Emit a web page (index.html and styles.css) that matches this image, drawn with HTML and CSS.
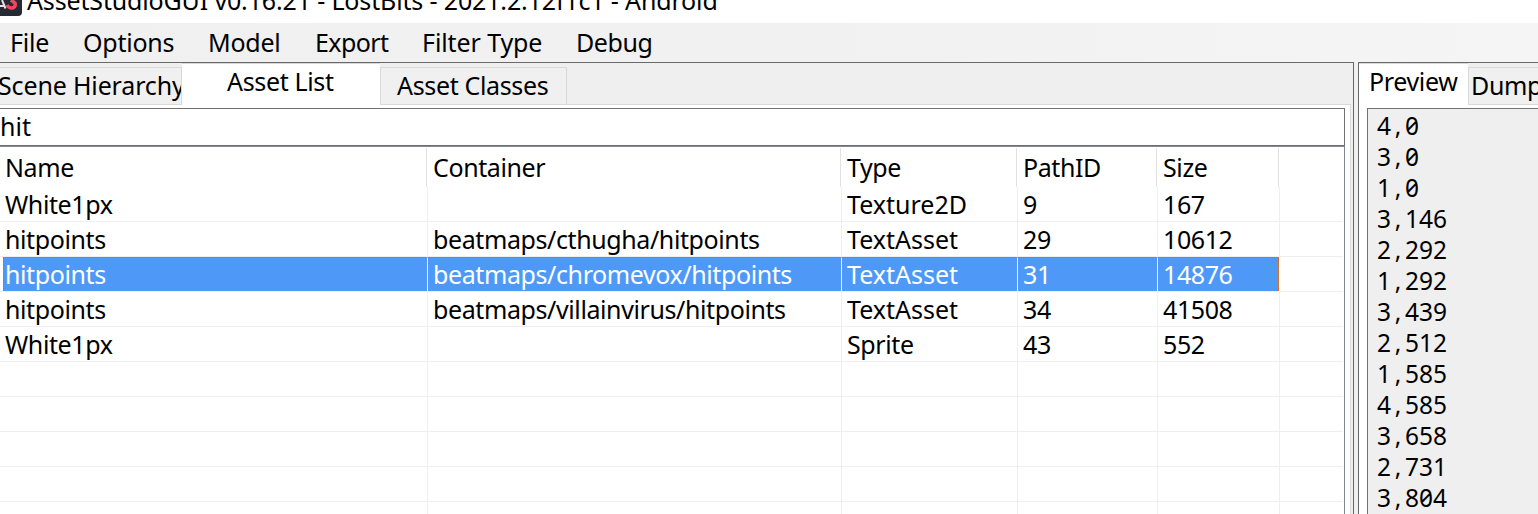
FILE: index.html
```
<!DOCTYPE html>
<html lang="en">
<head>
<meta charset="utf-8">
<title>AssetStudioGUI</title>
<link rel="stylesheet" href="styles.css">
</head>
<body>
<div class="window">
  <header class="titlebar">
    <svg class="logo" width="22" height="16" viewBox="0 0 22 16">
      <path d="M0 0H22V12Q22 16 18 16H0Z" fill="#262a35"/>
      <path d="M0 6H4M2 0L5.500 8.500" fill="none" stroke="#eadfe6" stroke-width="2"/>
      <path d="M7 5Q9 8.500 12.500 8Q16 7 15 3L11 0" fill="none" stroke="#f4455f" stroke-width="3.500"/>
    </svg>
    <span class="caption">AssetStudioGUI v0.16.21 - LostBits - 2021.2.12f1c1 - Android</span>
  </header>
  <nav class="menu">
    <span class="item file">File</span><span class="item options">Options</span><span class="item model">Model</span><span class="item export">Export</span><span class="item filter">Filter Type</span><span class="item debug">Debug</span>
  </nav>
  <main class="split">
    <section class="assets">
      <div class="tabs">
        <div class="tab scene"><span>Scene Hierarchy</span></div>
        <div class="tab list active"><span>Asset List</span></div>
        <div class="tab classes"><span>Asset Classes</span></div>
      </div>
      <div class="page">
        <div class="search"><span>hit</span></div>
        <div class="listview">
          <div class="row head"><div>Name</div><div>Container</div><div>Type</div><div>PathID</div><div>Size</div></div>
          <div class="row"><div>White1px</div><div></div><div class="wide">Texture2D</div><div>9</div><div>167</div></div>
          <div class="row"><div>hitpoints</div><div>beatmaps/cthugha/hitpoints</div><div class="wide">TextAsset</div><div>29</div><div>10612</div></div>
          <div class="row selected"><div>hitpoints</div><div>beatmaps/chromevox/hitpoints</div><div class="wide">TextAsset</div><div>31</div><div>14876</div></div>
          <div class="row"><div>hitpoints</div><div>beatmaps/villainvirus/hitpoints</div><div class="wide">TextAsset</div><div>34</div><div>41508</div></div>
          <div class="row"><div>White1px</div><div></div><div>Sprite</div><div>43</div><div>552</div></div>
          <div class="row"><div></div><div></div><div></div><div></div><div></div></div>
          <div class="row"><div></div><div></div><div></div><div></div><div></div></div>
          <div class="row"><div></div><div></div><div></div><div></div><div></div></div>
          <div class="row"><div></div><div></div><div></div><div></div><div></div></div>
          <div class="row"><div></div><div></div><div></div><div></div><div></div></div>
        </div>
      </div>
    </section>
    <section class="viewer">
      <div class="tabs">
        <div class="tab preview active"><span>Preview</span></div>
        <div class="tab dump"><span>Dump</span></div>
      </div>
      <div class="page">
        <div class="text">
          <p>4<i>,</i>0</p><p>3<i>,</i>0</p><p>1<i>,</i>0</p><p>3<i>,</i>146</p><p>2<i>,</i>292</p><p>1<i>,</i>292</p><p>3<i>,</i>439</p><p>2<i>,</i>512</p><p>1<i>,</i>585</p><p>4<i>,</i>585</p><p>3<i>,</i>658</p><p>2<i>,</i>731</p><p>3<i>,</i>804</p>
        </div>
      </div>
    </section>
  </main>
</div>
</body>
</html>
```
FILE: styles.css
```
* { box-sizing: border-box; }
body { margin: 0; overflow: hidden; background: #fff; color: #000; font-family: "Noto Sans", "Open Sans", sans-serif; font-size: 25px; white-space: nowrap; }
.window { width: 1538px; height: 514px; overflow: hidden; display: flex; flex-direction: column; }
.titlebar { height: 23px; flex: none; display: flex; align-items: flex-start; overflow: hidden; background: #fff; }
.logo { display: block; flex: none; }
.caption { margin-left: 5px; line-height: 1px; letter-spacing: -0.150px; }
.menu { height: 39px; flex: none; display: flex; line-height: 39px; padding-left: 10px; background: linear-gradient(90deg, #f0f0f0, #f1f1f1 50%, #f5f5f5); }
.item { flex: none; letter-spacing: -0.250px; }
.file { width: 73px; }
.options { width: 125px; }
.model { width: 107px; }
.export { width: 107px; letter-spacing: -0.600px; }
.filter { width: 154px; letter-spacing: -0.100px; }
.debug { letter-spacing: -0.400px; }
.split { flex: 1; min-height: 0; display: grid; grid-template-columns: 1354px 180px; column-gap: 4px; background: #f0f0f0; }
.assets, .viewer { border-top: 1px solid #696969; display: flex; flex-direction: column; min-width: 0; min-height: 0; overflow: hidden; background: #efefef; }
.assets { border-right: 1px solid #696969; padding-right: 2px; }
.viewer { border-left: 1px solid #696969; }
.tabs { height: 42px; flex: none; display: flex; align-items: flex-end; }
.tab { height: 38px; flex: none; overflow: hidden; line-height: 34px; border: 1px solid #d9d9d9; border-left: 0; background: #f0f0f0; letter-spacing: -0.350px; }
.tab.active { height: 42px; line-height: 35px; background: #fff; border-bottom: 0; border-right: 0; }
.scene { width: 182px; }
.scene span { margin-left: -2px; letter-spacing: -0.150px; }
.list { width: 198px; padding-left: 45px; }
.classes { width: 187px; padding-left: 16px; border-left: 1px solid #d9d9d9; }
.page { flex: 1; min-height: 0; background: #fff; padding-top: 3px; }
.assets .page { border-top: 1px solid #d9d9d9; border-right: 1px solid #d9d9d9; padding-right: 5px; margin-top: -1px; }
.tabs { position: relative; }
.search { height: 38px; line-height: 35px; border: 1px solid #707375; border-left: 0; }
.listview { height: 368px; border-top: 1px solid #828790; border-right: 1px solid #828790; overflow: hidden; padding-right: 1px; padding-top: 1px; }
.row { height: 35px; line-height: 34px; display: grid; grid-template-columns: 428px 414px 176px 140px 122px 1fr; border-bottom: 1px solid #efefef; letter-spacing: -0.400px; }
.row > div { border-right: 1px solid #efefef; padding-left: 5px; }
.row > .wide { letter-spacing: 0; }
.head { height: 39px; line-height: 39px; border: 0; grid-template-columns: 427px 414px 176px 140px 122px 1fr; }
.head > div { border-color: #e2e2e2; padding-left: 6px; }
.head > div:first-child { padding-left: 5px; }
.selected > div { background: #4e99f7; color: #fff; border-top: 1px dotted #d56a20; line-height: 33px; }
.selected > div:first-child { margin-left: 3px; padding-left: 2px; border-left: 1px dotted #d56a20; padding-left: 1px; }
.selected > div:last-child { border-right: 1px dotted #d56a20; margin-right: 1px; }
.preview { width: 109px; padding-left: 10px; }
.dump { width: 100px; padding-left: 2px; border-left: 1px solid #d9d9d9; }
.viewer .page { padding-left: 8px; }
.text { height: 420px; border-top: 1px solid #707375; border-left: 1px solid #707375; background: #efefef; padding: 1px 0 0 9px; font-size: 24.500px; font-variant-numeric: slashed-zero; }
.text p { margin: 0; height: 31px; line-height: 31px; }
.text i { display: inline-block; width: 14px; text-align: center; font-style: normal; }
```
